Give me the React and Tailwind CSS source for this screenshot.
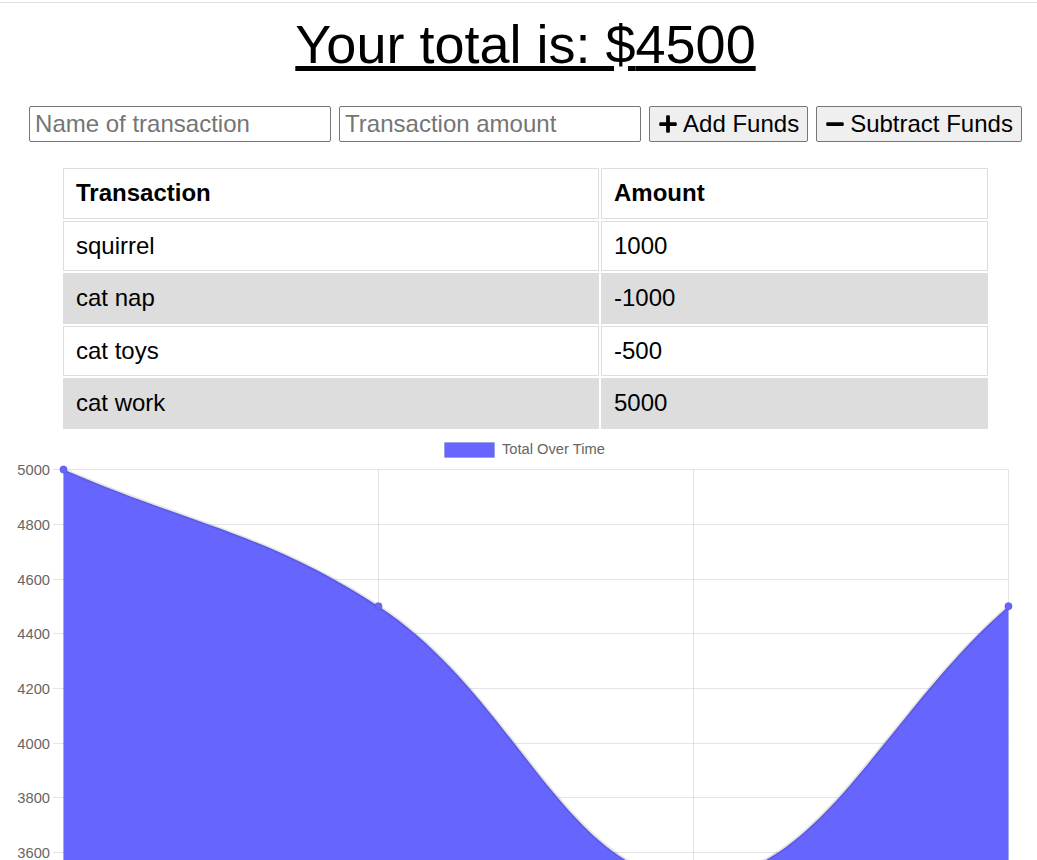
import { FaPlus, FaMinus } from "react-icons/fa";

const transactions = [
  { name: "squirrel", value: 1000 },
  { name: "cat nap", value: -1000 },
  { name: "cat toys", value: -500 },
  { name: "cat work", value: 5000 },
];

// chart geometry (page pixels)
const left = 63.5;
const right = 1008.5;
const top = 469.5;
const step = 54.71; // px per 200
const yFor = (v) => top + ((5000 - v) / 200) * step;

// running totals, oldest first
const totals = [];
let sum = 0;
[...transactions].reverse().forEach((t) => {
  sum += t.value;
  totals.push(sum);
});

const points = totals.map((v, i) => ({
  x: left + (i * (right - left)) / (totals.length - 1),
  y: yFor(v),
}));

// chart.js style spline, tension 0.4
function splinePath(pts, t = 0.4) {
  const ctrl = pts.map((p, i) => {
    const prev = pts[i - 1] || p;
    const next = pts[i + 1] || p;
    const d01 = Math.hypot(p.x - prev.x, p.y - prev.y);
    const d12 = Math.hypot(next.x - p.x, next.y - p.y);
    const s01 = d01 / (d01 + d12 || 1);
    const s12 = d12 / (d01 + d12 || 1);
    const fa = t * s01;
    const fb = t * s12;
    return {
      px: p.x - fa * (next.x - prev.x),
      py: p.y - fa * (next.y - prev.y),
      nx: p.x + fb * (next.x - prev.x),
      ny: p.y + fb * (next.y - prev.y),
    };
  });
  let d = `M${pts[0].x},${pts[0].y}`;
  for (let i = 1; i < pts.length; i++) {
    d += ` C${ctrl[i - 1].nx},${ctrl[i - 1].ny} ${ctrl[i].px},${ctrl[i].py} ${pts[i].x},${pts[i].y}`;
  }
  return d;
}

const ticks = [5000, 4800, 4600, 4400, 4200, 4000, 3800, 3600, 3400];
const gridY = [469.5, 524.5, 579.5, 633.5, 688.5, 743.5, 797.5, 852.5, 907.5];

function Chart() {
  const line = splinePath(points);
  const area = `${line} L${right},920 L${left},920 Z`;
  return (
    <svg width="1050" height="430" viewBox="0 436 1050 430" className="block mt-[5px]">
      {/* legend */}
      <rect x="444.5" y="442.5" width="50" height="15" fill="#6666ff" stroke="rgba(0,0,0,0.1)" />
      <text x="502" y="454" fontSize="14.7" fill="#666" fontFamily="'Liberation Sans', Arial, sans-serif">
        Total Over Time
      </text>

      {/* grid */}
      {gridY.map((y) => (
        <line key={y} x1="53" x2={right} y1={y} y2={y} stroke="rgba(0,0,0,0.1)" />
      ))}
      {points.map((p) => (
        <line key={p.x} x1={p.x} x2={p.x} y1={top} y2="920" stroke="rgba(0,0,0,0.1)" />
      ))}
      {ticks.map((v, i) => (
        <text
          key={v}
          x="50"
          y={gridY[i] + 5}
          fontSize="14.7"
          fill="#666"
          textAnchor="end"
          fontFamily="'Liberation Sans', Arial, sans-serif"
        >
          {v}
        </text>
      ))}

      {/* data */}
      <path d={area} fill="#6666ff" />
      <path d={line} fill="none" stroke="rgba(0,0,0,0.1)" strokeWidth="3.5" />
      {points.map((p) => (
        <circle key={p.x} cx={p.x} cy={p.y} r="3.7" fill="#6666ff" stroke="rgba(0,0,0,0.1)" strokeWidth="1.2" />
      ))}
    </svg>
  );
}

export default function App() {
  return (
    <div className="h-[860px] overflow-hidden bg-white text-black font-['Liberation_Sans',Arial,sans-serif]">
      <div className="w-[1051px]">
        <div className="mt-[2px] h-px bg-[#e0e0e0]" />

        <h1 className="mt-[10px] text-center text-[54px] leading-[62px] font-normal underline">
          Your total is: ${sum}
        </h1>

        {/* form */}
        <div className="mt-[31px] flex justify-center gap-2">
          <input
            type="text"
            placeholder="Name of transaction"
            className="w-[302px] h-[36px] border border-[#767676] rounded-[2px] px-[5px] text-[24px] placeholder-[#757575] outline-none"
          />
          <input
            type="number"
            placeholder="Transaction amount"
            className="w-[302px] h-[36px] border border-[#767676] rounded-[2px] px-[5px] text-[24px] placeholder-[#757575] outline-none"
          />
          <button className="h-[36px] flex items-center gap-[5px] px-2 bg-[#efefef] border border-[#767676] rounded-[2px] text-[24px]">
            <FaPlus className="w-[20px] h-[20px]" />
            Add Funds
          </button>
          <button className="h-[36px] flex items-center gap-[5px] px-2 bg-[#efefef] border border-[#767676] rounded-[2px] text-[24px]">
            <FaMinus className="w-[20px] h-[20px]" />
            Subtract Funds
          </button>
        </div>

        {/* transactions */}
        <table className="mx-auto mt-[24px] border-separate border-spacing-[2px] text-[24px]">
          <thead>
            <tr className="h-[50.5px]">
              <th className="w-[536px] border border-[#dddddd] px-3 text-left font-bold">Transaction</th>
              <th className="w-[387px] border border-[#dddddd] px-3 text-left font-bold">Amount</th>
            </tr>
          </thead>
          <tbody>
            {transactions.map((t, i) => (
              <tr key={t.name} className={i % 2 === 1 ? "h-[50.5px] bg-[#dddddd]" : "h-[50.5px]"}>
                <td className="border border-[#dddddd] px-3">{t.name}</td>
                <td className="border border-[#dddddd] px-3">{t.value}</td>
              </tr>
            ))}
          </tbody>
        </table>

        <Chart />
      </div>
    </div>
  );
}
